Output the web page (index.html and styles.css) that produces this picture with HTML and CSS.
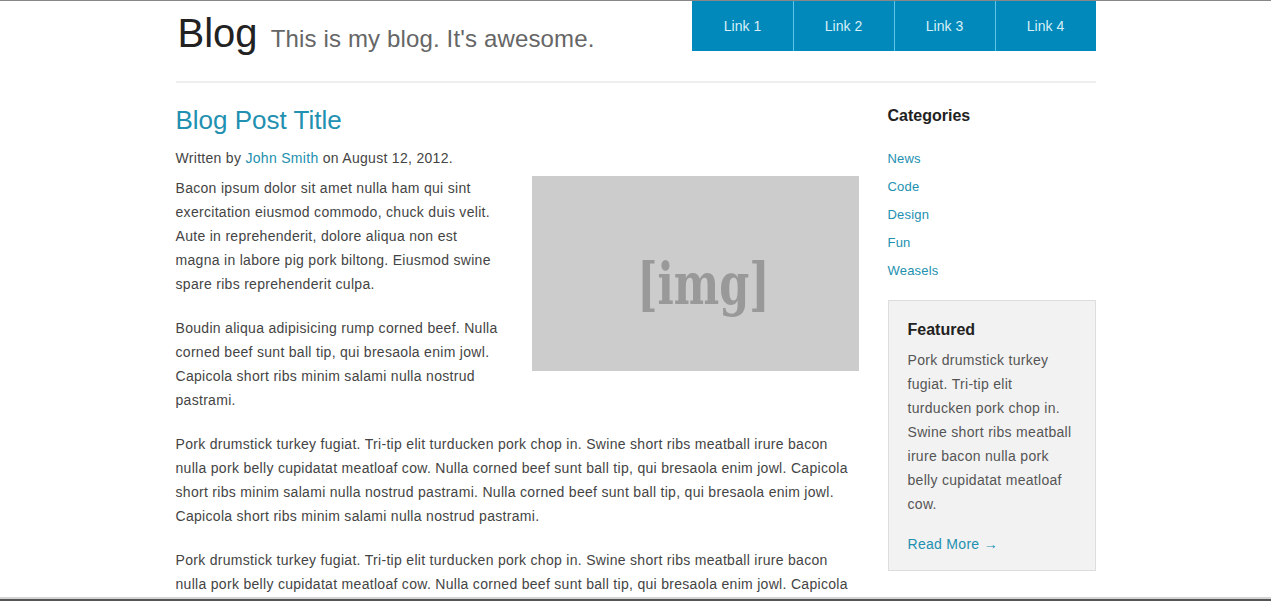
FILE: index.html
```html
<!DOCTYPE html>
<html lang="en">
<head>
    <meta charset="UTF-8">
    <meta name="viewport" content="width=device-width, initial-scale=1.0">
    <title>Blog</title>
    <link rel="stylesheet" href="styles.css">
</head>
<body>
    <header class="site-header">
        <h1 class="brand">Blog <small>This is my blog. It's awesome.</small></h1>
        <nav class="main-nav">
            <a href="#">Link 1</a>
            <a href="#">Link 2</a>
            <a href="#">Link 3</a>
            <a href="#">Link 4</a>
        </nav>
    </header>

    <div class="layout">
        <article class="post">
            <h2>Blog Post Title</h2>
            <p class="byline">Written by <a href="#">John Smith</a> on August 12, 2012.</p>
            <p><span class="post-image"><span>[img]</span></span>Bacon ipsum dolor sit amet nulla ham qui sint exercitation eiusmod commodo, chuck duis velit. Aute in reprehenderit, dolore aliqua non est magna in labore pig pork biltong. Eiusmod swine spare ribs reprehenderit culpa.</p>
            <p>Boudin aliqua adipisicing rump corned beef. Nulla corned beef sunt ball tip, qui bresaola enim jowl. Capicola short ribs minim salami nulla nostrud pastrami.</p>
            <p>Pork drumstick turkey fugiat. Tri-tip elit turducken pork chop in. Swine short ribs meatball irure bacon nulla pork belly cupidatat meatloaf cow. Nulla corned beef sunt ball tip, qui bresaola enim jowl. Capicola short ribs minim salami nulla nostrud pastrami. Nulla corned beef sunt ball tip, qui bresaola enim jowl. Capicola short ribs minim salami nulla nostrud pastrami.</p>
            <p>Pork drumstick turkey fugiat. Tri-tip elit turducken pork chop in. Swine short ribs meatball irure bacon nulla pork belly cupidatat meatloaf cow. Nulla corned beef sunt ball tip, qui bresaola enim jowl. Capicola short ribs minim salami nulla nostrud pastrami. Nulla corned beef sunt ball tip, qui bresaola enim jowl. Capicola short ribs minim salami nulla nostrud pastrami.</p>
        </article>

        <aside class="sidebar">
            <h3>Categories</h3>
            <ul class="categories">
                <li><a href="#">News</a></li>
                <li><a href="#">Code</a></li>
                <li><a href="#">Design</a></li>
                <li><a href="#">Fun</a></li>
                <li><a href="#">Weasels</a></li>
            </ul>
            <div class="featured">
                <h4>Featured</h4>
                <p>Pork drumstick turkey fugiat. Tri-tip elit turducken pork chop in. Swine short ribs meatball irure bacon nulla pork belly cupidatat meatloaf cow.</p>
                <p class="more"><a href="#">Read More &rarr;</a></p>
            </div>
        </aside>
    </div>

    <div class="window-edge"></div>
</body>
</html>
```

FILE: styles.css
```css
body {
    font-family: "Liberation Sans", Arial, sans-serif;
    font-size: 14px;
    letter-spacing: 0.3px;
    color: #444;
    background-color: #fff;
    margin: 0;
    border-top: 1px solid #888;
}
a {
    color: #2290b0;
    text-decoration: none;
}
.site-header {
    width: 920px;
    height: 80px;
    margin: 0 auto;
    display: flex;
    justify-content: space-between;
    align-items: flex-start;
    border-bottom: 2px solid #eee;
}
.brand {
    margin: 9px 0 0 2px;
    font-size: 40px;
    line-height: 46px;
    font-weight: normal;
    letter-spacing: 0;
    color: #222;
}
.brand small {
    font-size: 24px;
    letter-spacing: 0.15px;
    color: #666;
    margin-left: 2px;
}
.main-nav {
    display: flex;
    background-color: #0089ba;
    height: 50px;
    padding-left: 1px;
}
.main-nav a {
    width: 100px;
    line-height: 50px;
    text-align: center;
    color: #d9eff8;
    letter-spacing: 0;
    border-left: 1px solid #5cc6ea;
}
.main-nav a:first-child {
    border-left: none;
}
.layout {
    width: 920px;
    margin: 0 auto;
    padding-top: 22px;
    display: grid;
    grid-template-columns: 1fr 208px;
    gap: 29px;
}
.post h2 {
    margin: 0 0 11px;
    font-size: 26px;
    line-height: 30px;
    font-weight: normal;
    letter-spacing: 0;
    color: #2290b0;
}
.post p {
    margin: 0 0 20px;
    line-height: 24px;
}
.post .byline {
    margin-bottom: 6px;
}
.post-image {
    float: right;
    width: 327px;
    height: 195px;
    margin: 0 0 20px 28px;
    padding: 20px 0 0 16px;
    box-sizing: border-box;
    background-color: #ccc;
    display: flex;
    justify-content: center;
    align-items: center;
    font-family: "DejaVu Serif", serif;
    font-weight: bold;
    font-size: 58px;
    letter-spacing: 0;
    color: #999;
}
.post-image span {
    transform: scaleX(0.74);
}
.sidebar {
    padding-top: 1px;
}
.sidebar h3 {
    margin: 0 0 19px;
    font-size: 16px;
    line-height: 20px;
    letter-spacing: 0;
    color: #222;
}
.categories {
    list-style: none;
    margin: 0 0 15px;
    padding: 0;
}
.categories li {
    font-size: 13px;
    line-height: 28px;
    letter-spacing: 0.2px;
}
.featured {
    background-color: #f2f2f2;
    border: 1px solid #ddd;
    padding: 19px 19px 14px;
}
.featured h4 {
    margin: 0 0 8px;
    font-size: 16px;
    line-height: 20px;
    letter-spacing: 0;
    color: #222;
}
.featured p {
    margin: 0 0 16px;
    line-height: 24px;
    color: #555;
}
.featured .more {
    margin: 0;
}
.window-edge {
    position: fixed;
    left: 0;
    right: 0;
    bottom: 0;
    height: 4px;
    background: linear-gradient(#d4d4d4 50%, #555 50%);
}
```
